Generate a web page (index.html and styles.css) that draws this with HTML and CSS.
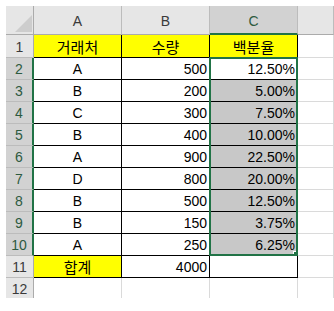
FILE: index.html
```html
<!DOCTYPE html>
<html lang="ko">
<head>
<meta charset="utf-8">
<link rel="stylesheet" href="styles.css">
</head>
<body>
<div class="sheet">
  <div class="hd corner"><svg class="tri" width="27" height="28" viewBox="0 0 27 28"><polygon points="26,9 26,26 9,26" fill="#cdcdcd"/></svg></div>
  <div class="hd col">A</div>
  <div class="hd col">B</div>
  <div class="hd col sel">C</div>
  <div class="hd col"></div>

  <div class="hd row">1</div>
  <div class="t ctr yel kr">거래처</div>
  <div class="t ctr yel kr">수량</div>
  <div class="t ctr yel kr">백분율</div>
  <div class="g"></div>

  <div class="hd row sel">2</div>
  <div class="t ctr">A</div>
  <div class="t num">500</div>
  <div class="t num">12.50%</div>
  <div class="g"></div>

  <div class="hd row sel">3</div>
  <div class="t ctr">B</div>
  <div class="t num">200</div>
  <div class="t num hl">5.00%</div>
  <div class="g"></div>

  <div class="hd row sel">4</div>
  <div class="t ctr">C</div>
  <div class="t num">300</div>
  <div class="t num hl">7.50%</div>
  <div class="g"></div>

  <div class="hd row sel">5</div>
  <div class="t ctr">B</div>
  <div class="t num">400</div>
  <div class="t num hl">10.00%</div>
  <div class="g"></div>

  <div class="hd row sel">6</div>
  <div class="t ctr">A</div>
  <div class="t num">900</div>
  <div class="t num hl">22.50%</div>
  <div class="g"></div>

  <div class="hd row sel">7</div>
  <div class="t ctr">D</div>
  <div class="t num">800</div>
  <div class="t num hl">20.00%</div>
  <div class="g"></div>

  <div class="hd row sel">8</div>
  <div class="t ctr">B</div>
  <div class="t num">500</div>
  <div class="t num hl">12.50%</div>
  <div class="g"></div>

  <div class="hd row sel">9</div>
  <div class="t ctr">B</div>
  <div class="t num">150</div>
  <div class="t num hl">3.75%</div>
  <div class="g"></div>

  <div class="hd row sel">10</div>
  <div class="t ctr">A</div>
  <div class="t num">250</div>
  <div class="t num hl">6.25%</div>
  <div class="g"></div>

  <div class="hd row">11</div>
  <div class="t ctr yel kr">합계</div>
  <div class="t num">4000</div>
  <div class="t"></div>
  <div class="g"></div>

  <div class="hd row end">12</div>
  <div class="g end"></div>
  <div class="g end"></div>
  <div class="g end"></div>
  <div class="g end"></div>

  <div class="selbox"><span class="handle"></span></div>
</div>
</body>
</html>
```

FILE: styles.css
```css
* { box-sizing: border-box; }
html, body { margin: 0; padding: 0; background: #fff; }
body { width: 334px; height: 311px; overflow: hidden; }

.sheet {
  position: relative;
  margin: 6px 0 0 6px;
  width: 328px;
  display: grid;
  grid-template-columns: 28px 88px 88px 88px 36px;
  grid-template-rows: 29px 23px repeat(10, 22px) 20px;
  font-family: "Liberation Sans", Arial, sans-serif;
  font-size: 14px;
  color: #000;
}

.sheet > div {
  display: flex;
  align-items: center;
  overflow: hidden;
  white-space: nowrap;
}

.hd {
  background: #e6e6e6;
  color: #3a3a3a;
  justify-content: center;
  border-right: 1px solid #bcbcbc;
  border-bottom: 1px solid #bcbcbc;
  font-size: 14px;
}
.hd.col { border-bottom: 1px solid #ababab; padding-top: 2px; }
.hd.row { border-right: 1px solid #ababab; padding-top: 1px; }
.hd.sel { background: #d2d2d2; color: #2d5a40; }
.hd.col.sel { border-bottom: 2px solid #217346; }
.hd.row.sel { border-right: 2px solid #217346; }
.hd.corner { padding: 0; border-bottom: 1px solid #ababab; border-right: 1px solid #ababab; align-items: flex-start; justify-content: flex-start; }
.tri { display: block; }
.hd.end { border-bottom: none; }

.t {
  border-right: 1px solid #000;
  border-bottom: 1px solid #000;
  background: #fff;
}
.g {
  border-right: 1px solid #dadada;
  border-bottom: 1px solid #dadada;
}
.g.end { border-bottom: none; }

.ctr { justify-content: center; padding-top: 1px; }
.num { justify-content: flex-end; padding-right: 2px; padding-top: 1px; }
.yel { background: #ffff00; }
.hl { background: #c8c8c8; }
.kr {
  font-family: "Noto Sans CJK KR", "Liberation Sans", sans-serif;
  font-size: 15px;
  padding-top: 0;
}

.selbox {
  position: absolute;
  left: 203px;
  top: 51px;
  width: 89px;
  height: 199px;
  border: 2px solid #217346;
  pointer-events: none;
}
.handle {
  position: absolute;
  right: -4px;
  bottom: -4px;
  width: 6px;
  height: 6px;
  background: #217346;
  border: 1px solid #fff;
  box-sizing: border-box;
  width: 7px;
  height: 7px;
}
```
